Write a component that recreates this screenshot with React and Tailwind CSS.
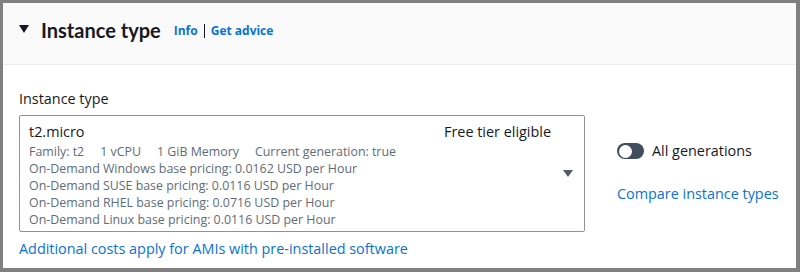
export default function App() {
  const details = [
    "On-Demand Windows base pricing: 0.0162 USD per Hour",
    "On-Demand SUSE base pricing: 0.0116 USD per Hour",
    "On-Demand RHEL base pricing: 0.0716 USD per Hour",
    "On-Demand Linux base pricing: 0.0116 USD per Hour",
  ];

  return (
    <div
      className="w-[800px] h-[272px] bg-white border-[#808080] border-t-[3px] border-l-[3px] border-r-4 border-b-4 overflow-hidden text-[#16191f]"
      style={{ fontFamily: '"Open Sans", "Liberation Sans", sans-serif' }}
    >
      {/* header */}
      <div className="h-[62px] bg-[#fafafa] border-b border-[#e9ebed] pl-4 pb-[8px] flex items-center">
        <svg width="10" height="9" viewBox="0 0 10 9" className="mr-[12px] mt-[-1px]">
          <path d="M0 0 H10 L5 8 Z" fill="#16191f" />
        </svg>
        <h2
          className="text-[20px] font-bold leading-none mr-[13px]"
          style={{ fontFamily: 'Lato, "Open Sans", sans-serif' }}
        >
          Instance type
        </h2>
        <div className="flex items-center text-[12px] font-bold text-[#0972d3] mt-[2px]">
          <span>Info</span>
          <span className="mx-[6px] h-[14px] w-px bg-[#16191f]" />
          <span>Get advice</span>
        </div>
      </div>

      {/* body */}
      <div className="pl-4 pt-[24px]">
        <div className="text-[14.4px] leading-5 mb-[6px]">Instance type</div>
        <div className="flex">
          <div className="w-[566px] h-[117px] border border-[#8d9399] rounded-[2px] pl-[9px] pr-[33px] pt-[5px] relative">
            <div className="flex justify-between text-[14.4px] leading-[22px]">
              <span>t2.micro</span>
              <span>Free tier eligible</span>
            </div>
            <div className="text-[12.4px] leading-[17px] text-[#5f6b7a]">
              <div className="flex gap-[16px]">
                <span>Family: t2</span>
                <span>1 vCPU</span>
                <span>1 GiB Memory</span>
                <span>Current generation: true</span>
              </div>
              {details.map((d) => (
                <div key={d}>{d}</div>
              ))}
            </div>
            <svg width="10" height="7" viewBox="0 0 10 7" className="absolute right-[11px] top-[54px]">
              <path d="M0 0 H10 L5 7 Z" fill="#545b64" />
            </svg>
          </div>

          <div className="ml-8 pt-[26px] flex flex-col gap-[23px]">
            <div className="flex items-center gap-2">
              <div className="w-[27px] h-[16px] rounded-full bg-[#414d5c] flex items-center pl-[2px]">
                <div className="w-[13px] h-[13px] rounded-full bg-white" />
              </div>
              <span className="text-[14.4px] leading-5">All generations</span>
            </div>
            <span className="text-[14.4px] leading-5 text-[#0972d3]">Compare instance types</span>
          </div>
        </div>
        <div className="mt-[7px] text-[14.4px] leading-5 text-[#0972d3]">
          Additional costs apply for AMIs with pre-installed software
        </div>
      </div>
    </div>
  );
}
